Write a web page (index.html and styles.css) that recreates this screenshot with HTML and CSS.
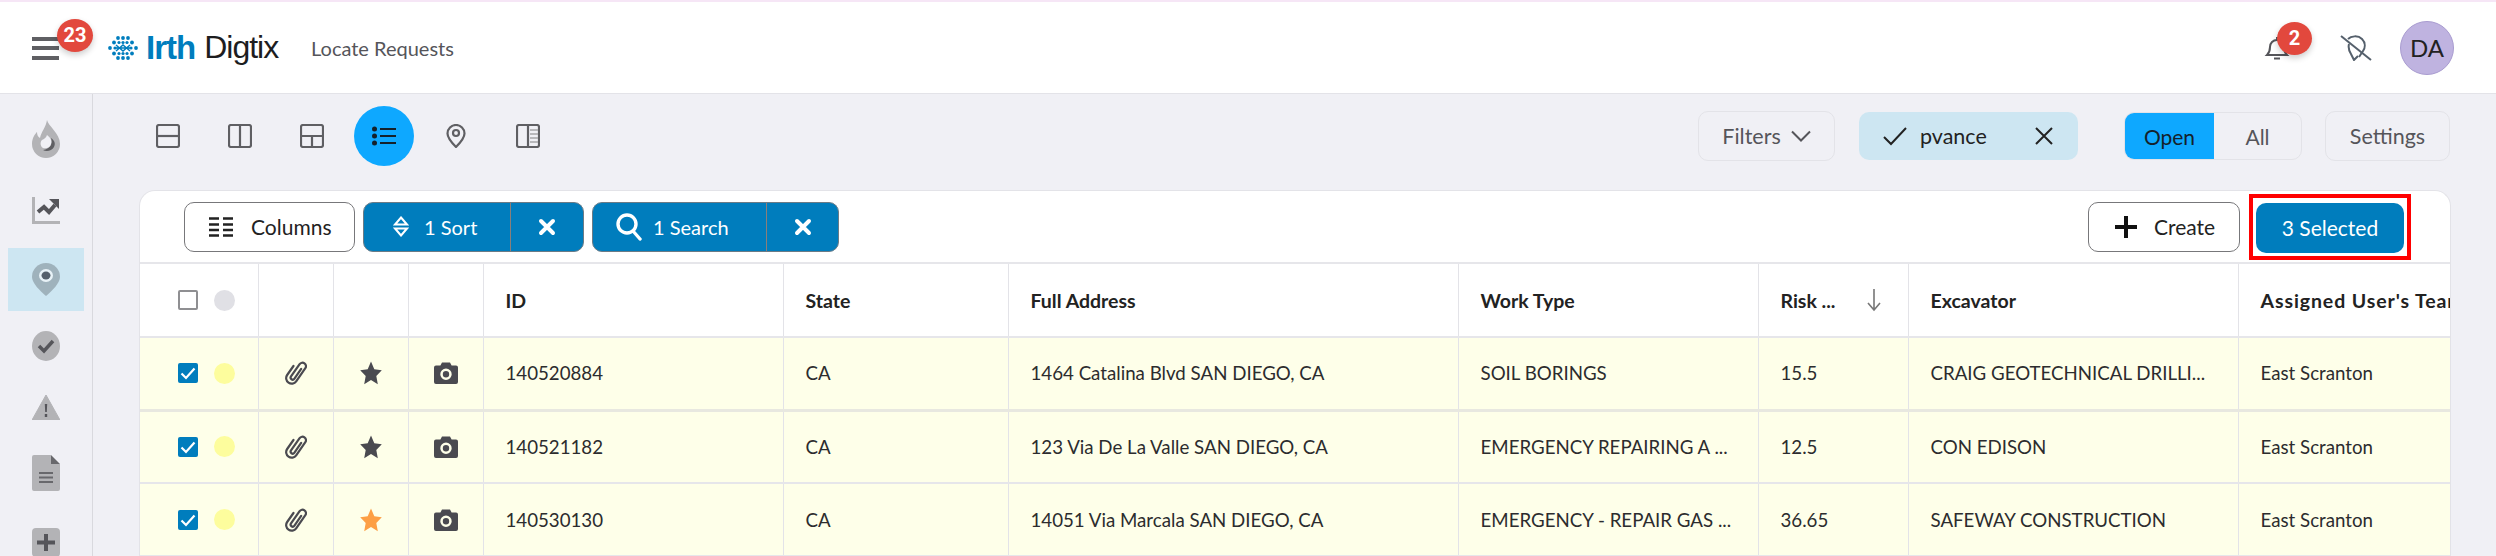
FILE: index.html
```html
<!DOCTYPE html>
<html lang="en">
<head>
  <meta charset="utf-8">
  <title>Locate Requests</title>
  <link rel="stylesheet" href="styles.css">
</head>
<body>
  <svg class="defs" width="0" height="0">
    <symbol id="clip" viewBox="0 0 22 24">
      <path transform="translate(11.500 12) rotate(35)" d="M1.500-6V6a2 2 0 0 1-4 0V-9a3.500 3.500 0 0 1 7 0V7a5.500 5.500 0 0 1-11 0V-4" fill="none" stroke="currentColor" stroke-width="2.200" stroke-linecap="round"/>
    </symbol>
    <symbol id="star" viewBox="0 0 22 24">
      <path d="M11 0.500l3.300 7.700 7.500 1-5.500 5.700 1.500 8.400-6.800-4.200-6.800 4.200 1.500-8.400L0.200 9.200l7.500-1z" fill="currentColor"/>
    </symbol>
    <symbol id="camera" viewBox="0 0 24 22">
      <path fill-rule="evenodd" d="M8 0.500h8l1.600 3H22a2 2 0 0 1 2 2V20a2 2 0 0 1-2 2H2a2 2 0 0 1-2-2V5.500a2 2 0 0 1 2-2h4.400zM12 6.500a5.700 5.700 0 1 0 0 11.400 5.700 5.700 0 0 0 0-11.400zM12 9a3.200 3.200 0 1 1 0 6.400A3.200 3.200 0 0 1 12 9z" fill="currentColor"/>
    </symbol>
    <symbol id="tick" viewBox="0 0 20 20">
      <path d="M3.500 10.500l4.500 4.500 8.500-9.500" fill="none" stroke="#fff" stroke-width="2.200"/>
    </symbol>
    <symbol id="cross" viewBox="0 0 18 18">
      <path d="M3 3l12 12M15 3L3 15" fill="none" stroke="#fff" stroke-width="4" stroke-linecap="round"/>
    </symbol>
  </svg>

  <header class="topbar">
    <div class="menu">
      <span class="burger"><i></i><i></i><i></i></span>
      <span class="badge badge-menu">23</span>
    </div>
    <div class="logo">
      <svg class="logo-mark" viewBox="0 0 30 24" width="30" height="24">
        <g fill="#007dbd">
          <circle cx="10" cy="2" r="1.900"/><circle cx="15" cy="2" r="1.900"/><circle cx="20" cy="2" r="1.900"/>
          <circle cx="6" cy="6.500" r="1.900"/><circle cx="11" cy="6.500" r="1.600"/><circle cx="15" cy="6.500" r="1.600"/><circle cx="19" cy="6.500" r="1.600"/><circle cx="24" cy="6.500" r="1.900"/>
          <circle cx="2" cy="12" r="1.900"/><circle cx="7" cy="12" r="1.600"/><circle cx="23" cy="12" r="1.600"/><circle cx="28" cy="12" r="1.900"/>
          <circle cx="6" cy="17.500" r="1.900"/><circle cx="11" cy="17.500" r="1.600"/><circle cx="15" cy="17.500" r="1.600"/><circle cx="19" cy="17.500" r="1.600"/><circle cx="24" cy="17.500" r="1.900"/>
          <circle cx="10" cy="22" r="1.900"/><circle cx="15" cy="22" r="1.900"/><circle cx="20" cy="22" r="1.900"/>
        </g>
        <path d="M6 12h18M8 9l7 6 7-6M8 15l7-6 7 6" stroke="#007dbd" stroke-width="1.500" fill="none"/>
      </svg>
      <span class="logo-irth">Irth</span>
      <span class="logo-digtix">Digtix</span>
    </div>
    <div class="page-name">Locate Requests</div>
    <div class="top-right">
      <div class="bell">
        <svg viewBox="0 0 26 26" width="26" height="26" fill="none" stroke="#55555a" stroke-width="2">
          <path d="M3 20c2-2 3-4 3-8 0-4 3-7 7-7s7 3 7 7c0 4 1 6 3 8z"/><path d="M10 23.500h6"/><path d="M13 2v3"/>
        </svg>
        <span class="badge badge-bell">2</span>
      </div>
      <svg class="pin-off" viewBox="0 0 32 26" width="32" height="26" fill="none" stroke="#55606c" stroke-width="2">
        <path d="M8 4c3-3 10-4 14 0 4 4 3 9 1 12l-4 6"/><path d="M9 9c-1 4 0 7 2 10l3 6 4-4"/><path d="M1 1l30 24"/>
      </svg>
      <div class="avatar">DA</div>
    </div>
  </header>

  <div class="main">
    <nav class="sidebar">
      <div class="side-item side-flame">
        <svg viewBox="0 0 28 38" width="28" height="38">
          <path d="M15 0c1 6 13 13 13 24a14 14 0 0 1-28 0c0-6 3-10 5-12 0 3 1 5 3 6 1-6 6-11 7-18z" fill="#b3b3b6"/>
          <path d="M19 18c2 6-1 11-8 12 3 2 9 1 11-3 2-4 0-7-3-9z" fill="#5f5f63"/>
          <path d="M15 15c4 3 5 6 4 9-1 4-5 5-8 4-3-2-3-6-1-8 2-1 4-2 5-5z" fill="#f0f0f5"/>
        </svg>
      </div>
      <div class="side-item side-chart">
        <svg viewBox="0 0 28 27" width="28" height="27">
          <path d="M0 0h3v24h25v3H0z" fill="#b3b3b6"/>
          <path d="M6 15l6-5 5 5 6-7" fill="none" stroke="#55555a" stroke-width="4"/>
          <path d="M17 2h10v10z" fill="#55555a"/>
        </svg>
      </div>
      <div class="side-item side-active">
        <svg viewBox="0 0 28 33" width="28" height="33">
          <path fill-rule="evenodd" d="M14 0a14 14 0 0 1 14 14c0 6-8 14-14 19C8 28 0 20 0 14A14 14 0 0 1 14 0z" fill="#9fb2bc"/>
          <ellipse cx="14" cy="12.500" rx="7" ry="6.500" fill="#e8f2f7"/>
          <ellipse cx="14" cy="12.500" rx="4.500" ry="4" fill="#55606c"/>
        </svg>
      </div>
      <div class="side-item side-check">
        <svg viewBox="0 0 28 30" width="28" height="30">
          <ellipse cx="14" cy="15" rx="14" ry="15" fill="#b3b3b6"/>
          <path d="M7 15l5 5 9-10" fill="none" stroke="#55555a" stroke-width="3.500"/>
        </svg>
      </div>
      <div class="side-item side-warn">
        <svg viewBox="0 0 28 25" width="28" height="25">
          <path d="M14 0l14 25H0z" fill="#b3b3b6" stroke="#b3b3b6" stroke-linejoin="round"/>
          <path d="M12.800 9h2.400l-.4 8h-1.600zM12.800 19h2.400v3h-2.400z" fill="#55555a"/>
        </svg>
      </div>
      <div class="side-item side-doc">
        <svg viewBox="0 0 28 36" width="28" height="36">
          <path d="M2 0h17v9h9v25a2 2 0 0 1-2 2H2a2 2 0 0 1-2-2V2a2 2 0 0 1 2-2z" fill="#b3b3b6"/>
          <path d="M19 0l9 9h-9z" fill="#68686c"/>
          <path d="M7 18h14M7 22.500h14M7 27h14" stroke="#68686c" stroke-width="2"/>
        </svg>
      </div>
      <div class="side-item side-plus">
        <svg viewBox="0 0 28 29" width="28" height="29">
          <rect width="28" height="29" rx="4" fill="#b3b3b6"/>
          <path d="M14 6v17M5 14.500h18" stroke="#55555a" stroke-width="4"/>
        </svg>
      </div>
    </nav>

    <section class="content">
      <div class="view-bar">
        <div class="views">
          <button class="view-btn">
            <svg viewBox="0 0 24 24" width="24" height="24"><rect x="1" y="1" width="22" height="22" rx="2"/><path d="M1 12h22"/></svg>
          </button>
          <button class="view-btn">
            <svg viewBox="0 0 24 24" width="24" height="24"><rect x="1" y="1" width="22" height="22" rx="2"/><path d="M12 1v22"/></svg>
          </button>
          <button class="view-btn">
            <svg viewBox="0 0 24 24" width="24" height="24"><rect x="1" y="1" width="22" height="22" rx="2"/><path d="M1 12h22M12 12v11"/></svg>
          </button>
          <button class="view-btn view-on">
            <svg viewBox="0 0 24 20" width="24" height="20" class="list-icon"><circle cx="2.500" cy="3" r="2.500"/><circle cx="2.500" cy="10" r="2.500"/><circle cx="2.500" cy="17" r="2.500"/><path d="M8 3h16M8 10h16M8 17h16"/></svg>
          </button>
          <button class="view-btn">
            <svg viewBox="0 0 20 24" width="20" height="24"><path d="M10 1a8.500 8.500 0 0 1 8.500 8.500c0 4-4 9-8.500 13.500C5.500 18.500 1.500 13.500 1.500 9.500A8.500 8.500 0 0 1 10 1z"/><circle cx="10" cy="9" r="3"/></svg>
          </button>
          <button class="view-btn">
            <svg viewBox="0 0 24 24" width="24" height="24"><rect x="1" y="1" width="22" height="22" rx="2"/><path d="M12 1v22"/><path class="thin" d="M14 6h8M14 10h8M14 14h8M14 18h8"/></svg>
          </button>
        </div>
        <div class="filters">
          <button class="ghost-btn btn-filters">Filters
            <svg viewBox="0 0 20 12" width="20" height="12" fill="none" stroke="#55555a" stroke-width="2"><path d="M1 1.500l9 9 9-9"/></svg>
          </button>
          <div class="chip">
            <svg viewBox="0 0 24 20" width="24" height="20" fill="none" stroke="#222" stroke-width="2"><path d="M1 11l7 7L23 2"/></svg>
            <span class="chip-name">pvance</span>
            <svg viewBox="0 0 18 18" width="18" height="18" fill="none" stroke="#222" stroke-width="2"><path d="M1 1l16 16M17 1L1 17"/></svg>
          </div>
          <div class="toggle">
            <span class="toggle-on">Open</span>
            <span class="toggle-off">All</span>
          </div>
          <button class="ghost-btn btn-settings">Settings</button>
        </div>
      </div>

      <div class="card">
        <div class="card-tools">
          <button class="tool-btn btn-columns">
            <svg viewBox="0 0 24 20" width="24" height="20" stroke="#222" stroke-width="2.400"><path d="M0 1.500h10M14 1.500h10M0 7.500h10M14 7.500h10M0 13h10M14 13h10M0 18.500h10M14 18.500h10"/></svg>
            Columns
          </button>
          <div class="pill pill-sort">
            <span class="pill-main">
              <svg viewBox="0 0 16 21" width="16" height="21" fill="none" stroke="#fff" stroke-width="2"><path d="M8 1.500l6 7H2z"/><path d="M8 19.500l6-7H2z"/></svg>
              1 Sort
            </span>
            <span class="pill-x"><svg width="18" height="18"><use href="#cross"/></svg></span>
          </div>
          <div class="pill pill-search">
            <span class="pill-main">
              <svg viewBox="0 0 26 28" width="26" height="28" fill="none" stroke="#fff" stroke-width="3.400"><circle cx="11" cy="11" r="9"/><path d="M17 18l7 8" stroke-linecap="round"/></svg>
              1 Search
            </span>
            <span class="pill-x"><svg width="18" height="18"><use href="#cross"/></svg></span>
          </div>
          <div class="tools-right">
            <button class="tool-btn btn-create">
              <svg viewBox="0 0 22 22" width="22" height="22" stroke="#111" stroke-width="4"><path d="M11 0v22M0 11h22"/></svg>
              Create
            </button>
            <div class="selected-mark">
              <button class="selected-btn">3 Selected</button>
            </div>
          </div>
        </div>

        <table class="grid">
          <colgroup>
            <col class="c-check"><col class="c-icon"><col class="c-icon"><col class="c-icon">
            <col class="c-id"><col class="c-state"><col class="c-addr"><col class="c-work">
            <col class="c-risk"><col class="c-exc"><col class="c-team">
          </colgroup>
          <thead>
            <tr>
              <th><div class="check-cell"><span class="box"></span><span class="dot dot-head"></span></div></th>
              <th></th><th></th><th></th>
              <th>ID</th>
              <th>State</th>
              <th>Full Address</th>
              <th>Work Type</th>
              <th>
                <div class="risk-head">Risk ...
                  <svg viewBox="0 0 14 24" width="14" height="24" fill="none" stroke="#777" stroke-width="1.600"><path d="M7 1v21M1 15l6 7 6-7"/></svg>
                </div>
              </th>
              <th>Excavator</th>
              <th class="th-team">Assigned User's Team</th>
            </tr>
          </thead>
          <tbody>
            <tr>
              <td><div class="check-cell"><span class="box box-on"><svg width="20" height="20"><use href="#tick"/></svg></span><span class="dot"></span></div></td>
              <td class="icon-cell"><svg class="ic-clip" width="22" height="24"><use href="#clip"/></svg></td>
              <td class="icon-cell"><svg class="ic-star" width="22" height="24"><use href="#star"/></svg></td>
              <td class="icon-cell"><svg class="ic-cam" width="24" height="22"><use href="#camera"/></svg></td>
              <td>140520884</td>
              <td>CA</td>
              <td>1464 Catalina Blvd SAN DIEGO, CA</td>
              <td>SOIL BORINGS</td>
              <td>15.5</td>
              <td>CRAIG GEOTECHNICAL DRILLI...</td>
              <td>East Scranton</td>
            </tr>
            <tr>
              <td><div class="check-cell"><span class="box box-on"><svg width="20" height="20"><use href="#tick"/></svg></span><span class="dot"></span></div></td>
              <td class="icon-cell"><svg class="ic-clip" width="22" height="24"><use href="#clip"/></svg></td>
              <td class="icon-cell"><svg class="ic-star" width="22" height="24"><use href="#star"/></svg></td>
              <td class="icon-cell"><svg class="ic-cam" width="24" height="22"><use href="#camera"/></svg></td>
              <td>140521182</td>
              <td>CA</td>
              <td>123 Via De La Valle SAN DIEGO, CA</td>
              <td>EMERGENCY REPAIRING A ...</td>
              <td>12.5</td>
              <td>CON EDISON</td>
              <td>East Scranton</td>
            </tr>
            <tr>
              <td><div class="check-cell"><span class="box box-on"><svg width="20" height="20"><use href="#tick"/></svg></span><span class="dot"></span></div></td>
              <td class="icon-cell"><svg class="ic-clip" width="22" height="24"><use href="#clip"/></svg></td>
              <td class="icon-cell"><svg class="ic-star ic-star-on" width="22" height="24"><use href="#star"/></svg></td>
              <td class="icon-cell"><svg class="ic-cam" width="24" height="22"><use href="#camera"/></svg></td>
              <td>140530130</td>
              <td>CA</td>
              <td>14051 Via Marcala SAN DIEGO, CA</td>
              <td>EMERGENCY - REPAIR GAS ...</td>
              <td>36.65</td>
              <td>SAFEWAY CONSTRUCTION</td>
              <td>East Scranton</td>
            </tr>
          </tbody>
        </table>
      </div>
    </section>
  </div>
</body>
</html>
```

FILE: styles.css
```css
* {
  box-sizing: border-box;
}
html, body {
  height: 100%;
}
body {
  margin: 0;
  background: #f0f0f5;
  color: #222;
  font-family: Lato, "Open Sans", sans-serif;
  font-size: 18.7px;
  overflow: hidden;
}
button {
  font: inherit;
  cursor: pointer;
}
.defs {
  position: absolute;
}

/* top bar */
.topbar {
  height: 94px;
  display: flex;
  align-items: center;
  background: #fff;
  border-top: 2px solid #f6e6f6;
  border-bottom: 1px solid #e3e3e8;
  padding: 0 42px 0 32px;
}
.menu {
  position: relative;
  width: 76px;
  height: 23px;
  margin-top: 1px;
}
.burger {
  display: flex;
  flex-direction: column;
  justify-content: space-between;
  width: 27px;
  height: 23px;
}
.burger i {
  display: block;
  height: 4px;
  background: #5f5f63;
}
.badge {
  position: absolute;
  display: flex;
  align-items: center;
  justify-content: center;
  border-radius: 50%;
  background: #e2483d;
  color: #fff;
  font-family: Roboto, sans-serif;
  font-weight: 700;
  font-size: 20px;
  box-shadow: 0 3px 6px rgba(0,0,0,0.2);
}
.badge-menu {
  left: 25px;
  top: -18px;
  width: 36px;
  height: 33px;
}
.logo {
  display: flex;
  align-items: center;
  width: 203px;
}
.logo-mark {
  margin-right: 8px;
}
.logo-irth {
  color: #007dbd;
  font-family: "Liberation Sans", sans-serif;
  font-size: 33px;
  font-weight: 700;
  letter-spacing: -1px;
  margin-right: 9px;
}
.logo-digtix {
  color: #1d1d1f;
  font-family: "Liberation Sans", sans-serif;
  font-size: 32px;
  letter-spacing: -1px;
}
.page-name {
  color: #55555a;
  font-size: 20px;
}
.top-right {
  margin-left: auto;
  display: flex;
  align-items: center;
}
.bell {
  position: relative;
  width: 26px;
  height: 26px;
  margin-right: 50px;
}
.badge-bell {
  left: 13px;
  top: -13px;
  width: 35px;
  height: 33px;
}
.pin-off {
  margin-right: 28px;
}
.avatar {
  width: 54px;
  height: 54px;
  border-radius: 50%;
  background: #bfb3e0;
  border: 1px solid #a99cd0;
  display: flex;
  align-items: center;
  justify-content: center;
  font-size: 24px;
  color: #222;
}

.main {
  display: flex;
  height: 462px;
}

/* left rail */
.sidebar {
  width: 93px;
  flex: none;
  border-right: 1px solid #d9d9de;
  padding: 0 8px;
  overflow: hidden;
}
.side-item {
  display: flex;
  justify-content: center;
}
.side-flame {
  padding-top: 26px;
}
.side-chart {
  padding-top: 39px;
}
.side-active {
  margin-top: 24px;
  padding: 15px 0;
  height: 63px;
  background: #cde6f2;
}
.side-check {
  padding-top: 20px;
}
.side-warn {
  padding-top: 34px;
}
.side-doc {
  padding-top: 35px;
}
.side-plus {
  padding-top: 37px;
}

/* view switcher row */
.content {
  flex: 1;
  min-width: 0;
  padding: 12px 46px 0 46px;
  overflow: hidden;
}
.view-bar {
  display: flex;
  align-items: flex-start;
  justify-content: space-between;
  height: 84px;
}
.views {
  display: flex;
  gap: 12px;
  margin-left: -1px;
}
.view-btn {
  width: 60px;
  height: 60px;
  padding: 0;
  border: 0;
  border-radius: 50%;
  background: none;
  display: flex;
  align-items: center;
  justify-content: center;
}
.view-btn svg {
  fill: none;
  stroke: #5f5f63;
  stroke-width: 2.200;
}
.view-btn .thin {
  stroke: #a5a5a8;
  stroke-width: 1.500;
}
.view-on {
  background: #0ea8ff;
}
.list-icon circle {
  fill: #14212b;
  stroke: none;
}
.view-btn .list-icon {
  stroke: #14212b;
}
.filters {
  display: flex;
  align-items: center;
  height: 50px;
  margin-top: 5px;
}
.ghost-btn {
  height: 50px;
  background: none;
  border: 1px solid #e3e3e8;
  border-radius: 10px;
  color: #55555a;
  font-size: 21.5px;
}
.btn-filters {
  width: 137px;
  margin-right: 24px;
  display: flex;
  align-items: center;
  justify-content: center;
  gap: 10px;
}
.chip {
  width: 219px;
  height: 48px;
  border-radius: 10px;
  background: #cde6f2;
  display: flex;
  align-items: center;
  padding: 0 25px 0 24px;
  margin-right: 46px;
  font-size: 21.5px;
}
.chip-name {
  margin-left: 13px;
  flex: 1;
}
.toggle {
  display: flex;
  width: 178px;
  height: 48px;
  margin-right: 23px;
  border: 1px solid #e3e3e8;
  border-radius: 10px;
  overflow: hidden;
  font-size: 21px;
}
.toggle span {
  display: flex;
  align-items: center;
  justify-content: center;
}
.toggle-on {
  width: 89px;
  background: #0ea8ff;
  color: #14212b;
}
.toggle-off {
  flex: 1;
  color: #55555a;
}
.btn-settings {
  width: 125px;
}

/* table card */
.card {
  width: 2312px;
  height: 380px;
  background: #fff;
  border: 1px solid #e3e3e8;
  border-bottom: 0;
  border-radius: 16px 16px 0 0;
  overflow: hidden;
}
.card-tools {
  display: flex;
  align-items: center;
  height: 73px;
  padding: 0 39px 0 44px;
  border-bottom: 2px solid #e6e6ea;
}
.tool-btn {
  height: 50px;
  display: flex;
  align-items: center;
  background: #fff;
  border: 1px solid #77777a;
  border-radius: 10px;
  color: #222;
  font-size: 21px;
}
.btn-columns {
  width: 171px;
  padding: 0 0 0 24px;
  gap: 18px;
  margin-right: 8px;
}
.pill {
  display: flex;
  height: 50px;
  background: #007dbd;
  border: 1px solid #6b7b86;
  border-radius: 10px;
  color: #fff;
  font-size: 20px;
  overflow: hidden;
}
.pill-sort {
  width: 221px;
  margin-right: 8px;
}
.pill-search {
  width: 247px;
}
.pill-main {
  display: flex;
  align-items: center;
  gap: 15px;
  padding-left: 29px;
  border-right: 1px solid #8a7f7a;
}
.pill-sort .pill-main {
  width: 147px;
}
.pill-search .pill-main {
  width: 174px;
  padding-left: 23px;
  gap: 11px;
}
.pill-x {
  flex: 1;
  display: flex;
  align-items: center;
  justify-content: center;
}
.pill-x svg {
  display: block;
}
.tools-right {
  margin-left: auto;
  display: flex;
  align-items: center;
}
.btn-create {
  width: 152px;
  padding: 0 0 0 26px;
  gap: 17px;
  margin-right: 9px;
}
.selected-mark {
  padding: 5px 3px 3px;
  border: 4px solid #f00;
  height: 66px;
  display: flex;
}
.selected-btn {
  width: 148px;
  height: 50px;
  border: 0;
  border-radius: 10px;
  background: #007dbd;
  color: #fff;
  font-size: 21px;
}

.grid {
  table-layout: fixed;
  width: 2394px;
  border-collapse: collapse;
}
.c-check { width: 118px; }
.c-icon { width: 75px; }
.c-id { width: 300px; }
.c-state { width: 225px; }
.c-addr { width: 450px; }
.c-work { width: 300px; }
.c-risk { width: 150px; }
.c-exc { width: 330px; }
.c-team { width: 296px; }
th, td {
  height: 73px;
  padding: 0 22px;
  text-align: left;
  white-space: nowrap;
  overflow: hidden;
  border-right: 1px solid #e3e3e8;
  border-bottom: 2px solid #e6e6ea;
}
th {
  font-weight: 700;
  font-size: 19.5px;
  color: #222;
}
.th-team {
  letter-spacing: 0.9px;
}
td {
  background: #feffe9;
  color: #2c2c2e;
}
tbody tr:first-child td {
  border-bottom-width: 3px;
  border-bottom-color: #e8e8e0;
}
.check-cell {
  display: flex;
  align-items: center;
  gap: 16px;
  padding-left: 16px;
}
.box {
  width: 20px;
  height: 20px;
  border: 2px solid #8f8f92;
  border-radius: 2px;
  background: #fff;
  display: block;
}
.box-on {
  border: 0;
  background: #007dbd;
}
.box-on svg {
  display: block;
}
.dot {
  width: 21px;
  height: 21px;
  border-radius: 50%;
  background: #fdfd9d;
}
.dot-head {
  background: #e0e0e5;
}
.icon-cell {
  padding: 0;
  text-align: center;
}
.icon-cell svg {
  display: block;
  margin: 0 auto;
  color: #4a4a50;
}
.ic-clip {
  color: #55555a;
}
.icon-cell .ic-star-on {
  color: #fd9f45;
}
.risk-head {
  display: flex;
  align-items: center;
  justify-content: space-between;
  margin-right: 5px;
}
```
